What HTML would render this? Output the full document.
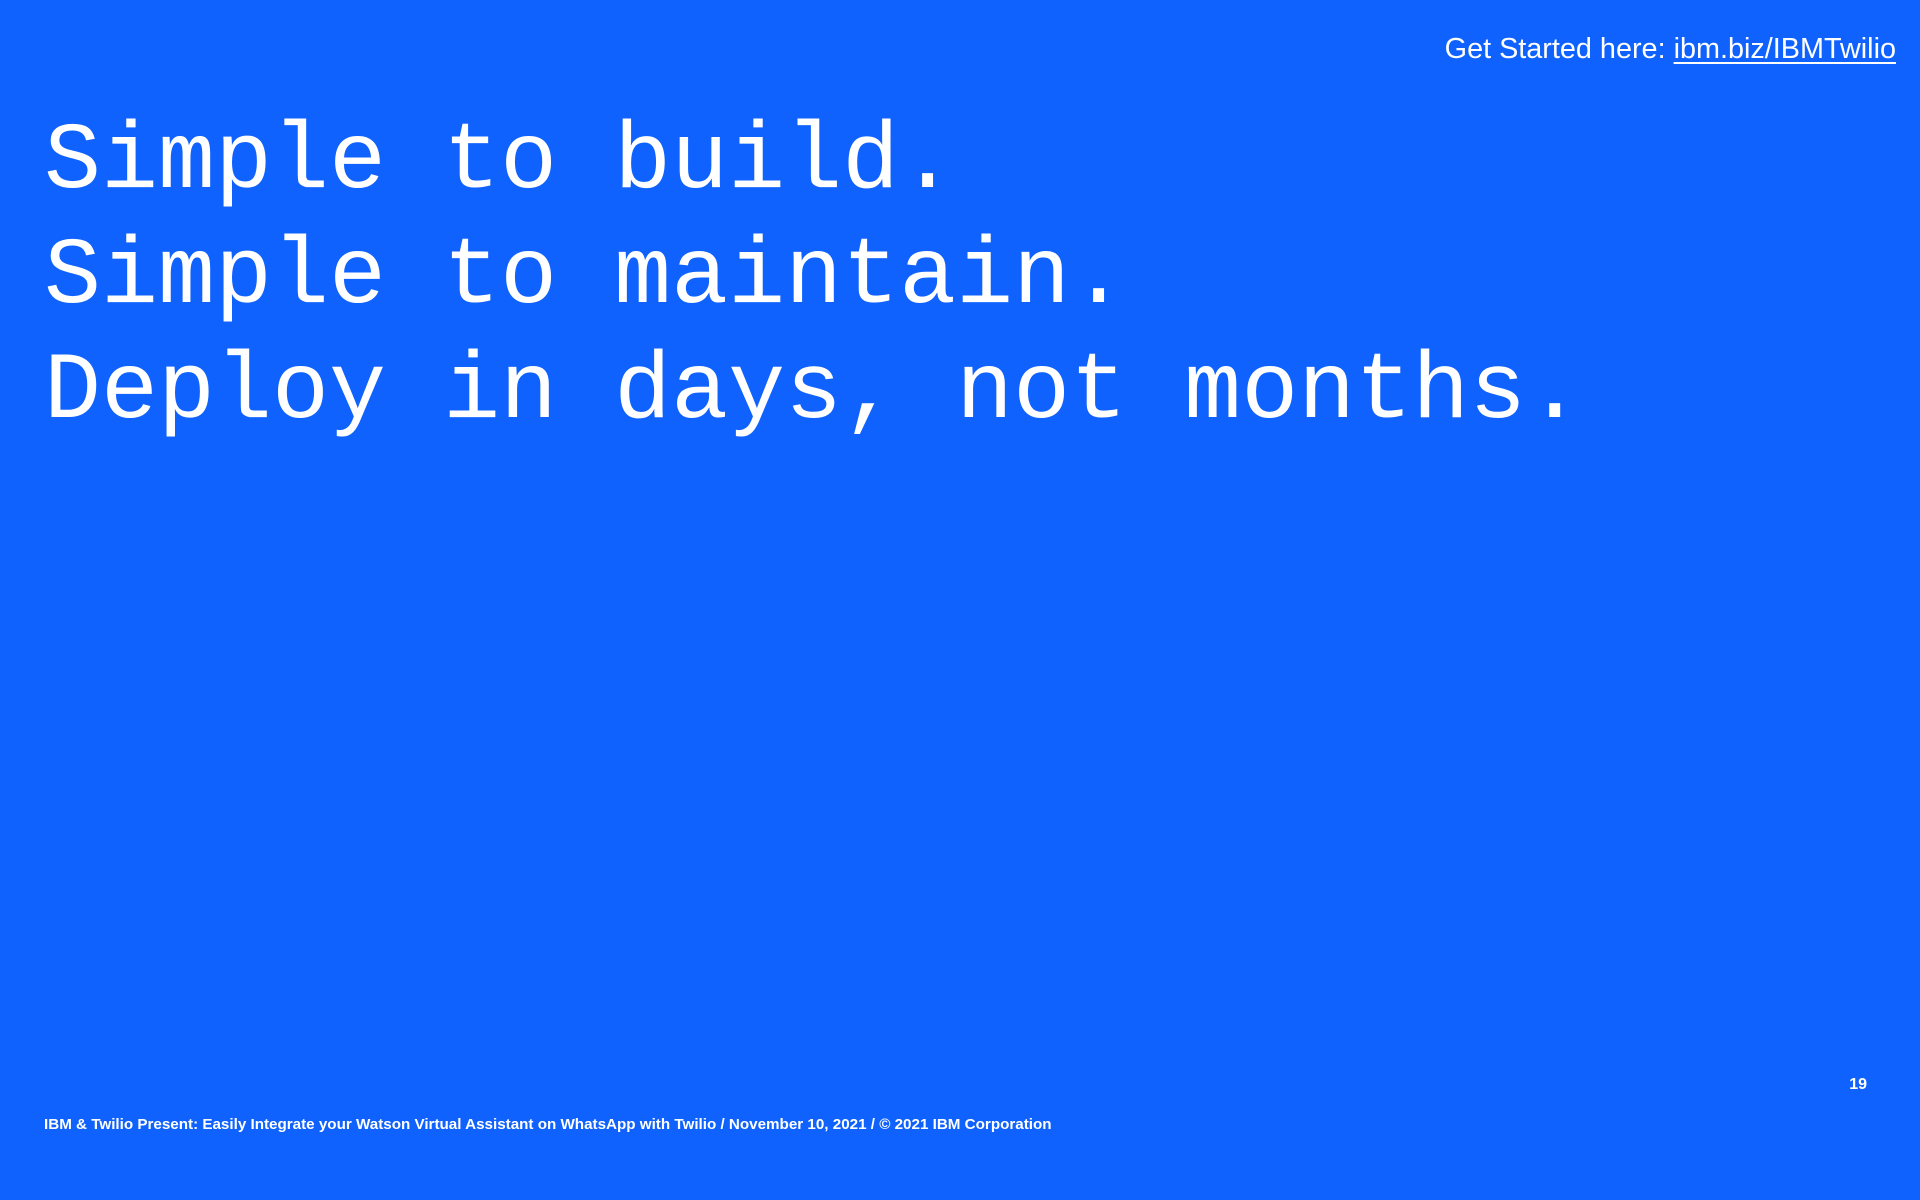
<!DOCTYPE html>
<html><head><meta charset="utf-8"><style>
html,body{margin:0;padding:0}
body{width:1920px;height:1200px;background:#0f62fe;position:relative;overflow:hidden;color:#fff;font-family:"Liberation Sans",sans-serif}
.top{position:absolute;right:24px;top:31px;font-size:28.8px;line-height:36px;white-space:nowrap}
.top u{text-decoration:underline;text-underline-offset:4px}
.h{position:absolute;left:44px;top:105px;font-family:"Liberation Mono",monospace;font-size:95px;line-height:115px;white-space:pre}
.foot{position:absolute;left:44px;top:1115px;font-size:15.2px;font-weight:bold;line-height:20px;white-space:nowrap}
.num{position:absolute;right:53px;top:1075px;font-size:16px;font-weight:bold;line-height:20px}
</style></head><body>
<div class="top">Get Started here: <u>ibm.biz/IBMTwilio</u></div>
<div class="h">Simple to build.
Simple to maintain.
Deploy in days, not months.</div>
<div class="num">19</div>
<div class="foot">IBM &amp; Twilio Present: Easily Integrate your Watson Virtual Assistant on WhatsApp with Twilio / November 10, 2021 / © 2021 IBM Corporation</div>
</body></html>
